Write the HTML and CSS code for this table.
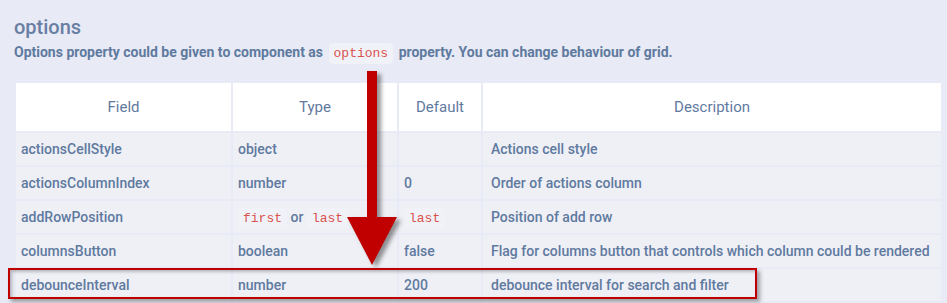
FILE: index.html
```html
<!DOCTYPE html>
<html lang="en">

<head>
	<meta charset="UTF-8">
	<meta name="viewport" content="width=device-width, initial-scale=1.0">
	<title>options</title>
	<link rel="stylesheet" href="styles.css">
</head>

<body>
	<div class="page">
		<h2 class="title">options</h2>
		<p class="lead">Options property could be given to component as <code>options</code> property. You can change behaviour of grid.</p>

		<table class="props">
			<thead>
				<tr>
					<th class="col-field">Field</th>
					<th class="col-type">Type</th>
					<th class="col-default">Default</th>
					<th class="col-desc">Description</th>
				</tr>
			</thead>
			<tbody>
				<tr>
					<td>actionsCellStyle</td>
					<td>object</td>
					<td></td>
					<td class="desc">Actions cell style</td>
				</tr>
				<tr>
					<td>actionsColumnIndex</td>
					<td>number</td>
					<td>0</td>
					<td class="desc">Order of actions column</td>
				</tr>
				<tr>
					<td>addRowPosition</td>
					<td><code>first</code> or <code>last</code></td>
					<td><code>last</code></td>
					<td class="desc">Position of add row</td>
				</tr>
				<tr>
					<td>columnsButton</td>
					<td>boolean</td>
					<td>false</td>
					<td class="desc">Flag for columns button that controls which column could be rendered</td>
				</tr>
				<tr>
					<td>debounceInterval</td>
					<td>number</td>
					<td>200</td>
					<td class="desc">debounce interval for search and filter</td>
				</tr>
			</tbody>
		</table>

		<!-- callout: arrow + box around the row -->
		<svg class="arrow" width="70" height="210" viewBox="0 0 70 210">
			<path d="M18 0 H28 V146 H48 L23 194 L-2 146 H18 Z" fill="#c00000" />
		</svg>
		<div class="mark"></div>
	</div>
</body>

</html>
```

FILE: styles.css
```css
body {
	margin: 0;
	background-color: #e8eaf5;
	font-family: Roboto, "Liberation Sans", sans-serif;
	color: #5f7a9f;
}

.page {
	position: relative;
	padding: 15px 0 0 14px;
	width: 929px;
}

.title {
	margin: 0;
	font-size: 20px;
	font-weight: 500;
	line-height: 24px;
	color: #687ea3;
}

.lead {
	margin: 2px 0 0 0;
	font-size: 14px;
	font-weight: 700;
	line-height: 22px;
}

code {
	font-family: "Liberation Mono", "Courier New", monospace;
	font-size: 13px;
	font-weight: 400;
	color: #d9534f;
	background-color: #f1f2f8;
	border-radius: 4px;
	padding: 2px 5px;
}

.lead code {
	padding: 3px 5px;
	margin: 0 2px;
}

.props {
	margin-top: 16px;
	border-collapse: separate;
	border-spacing: 2px;
	table-layout: fixed;
	width: 929px;
	font-size: 14px;
}

.props th {
	height: 48px;
	padding: 0;
	background-color: #ffffff;
	font-size: 15px;
	font-weight: 400;
	text-align: center;
}

.col-field { width: 215px; }
.col-type { width: 164px; }
.col-default { width: 82px; }

.props td {
	height: 32px;
	padding: 0 5px;
	background-color: #eff0f6;
	font-weight: 500;
	white-space: nowrap;
}

.props td.desc {
	padding-left: 8px;
}

.props td code {
	padding: 3px 5px;
}

.arrow {
	position: absolute;
	left: 349px;
	top: 71px;
	overflow: visible;
	filter: drop-shadow(4px 3px 2px rgba(60, 60, 60, 0.55));
}

.mark {
	position: absolute;
	left: 8px;
	top: 268px;
	width: 745px;
	height: 27px;
	border: 2px solid #c00000;
	box-shadow: 3px 3px 4px rgba(60, 60, 60, 0.45), inset 2px 2px 3px rgba(60, 60, 60, 0.3);
}
```
